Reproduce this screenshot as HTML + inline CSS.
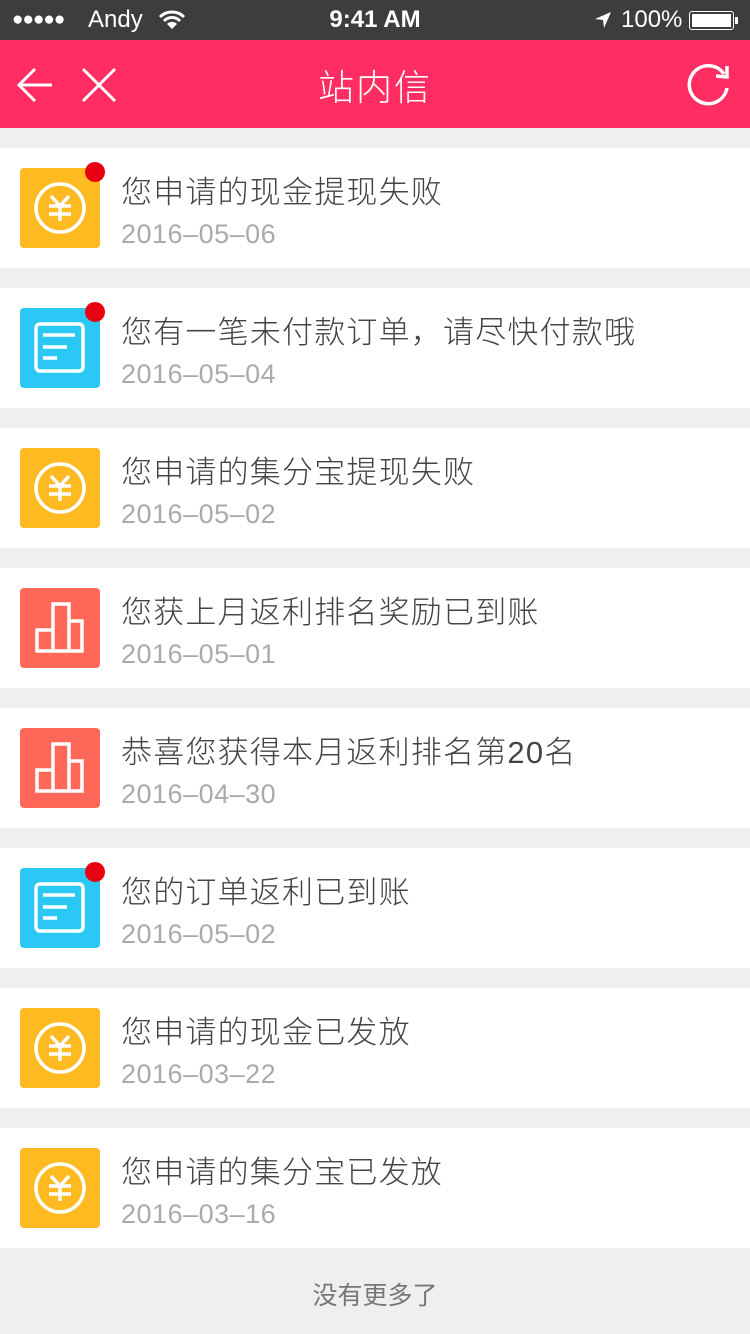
<!DOCTYPE html>
<html><head><meta charset="utf-8"><style>
*{margin:0;padding:0;box-sizing:border-box}
body{width:750px;height:1334px;background:#efefef;font-family:"Liberation Sans","Noto Sans CJK SC",sans-serif;position:relative;overflow:hidden}
.sb{position:absolute;top:0;left:0;width:750px;height:40px;background:#3d3d3d;color:#fff;font-size:24px}
.hd{position:absolute;top:40px;left:0;width:750px;height:88px;background:#ff2d62;color:#fff}
.row{position:absolute;left:0;width:750px;height:120px;background:#fff}
.row svg{position:absolute;left:0;top:0}
.t{position:absolute;left:121px;top:19px;font-size:31px;letter-spacing:1.2px;color:#444;white-space:nowrap;font-weight:300}
.d{position:absolute;left:121px;top:71px;font-size:27px;color:#aaa;letter-spacing:0.5px}
.ft{position:absolute;top:1276px;width:750px;text-align:center;font-size:25px;color:#777}
</style></head><body>
<div class="sb">
<div style="position:absolute;left:12px;top:9px;font-size:19px;letter-spacing:-1px">●●●●●</div>
<div style="position:absolute;left:88px;top:6px">Andy</div>
<svg style="position:absolute;left:158px;top:9px" width="28" height="22" viewBox="0 0 28 22"><path d="M2 8 A17 17 0 0 1 26 8" stroke="#fff" stroke-width="3" fill="none"/><path d="M6 12 A11 11 0 0 1 22 12" stroke="#fff" stroke-width="3" fill="none"/><path d="M14 20 L9 15 A7 7 0 0 1 19 15 Z" fill="#fff"/></svg>
<div style="position:absolute;left:0;width:750px;text-align:center;top:6px;font-weight:bold">9:41 AM</div>
<svg style="position:absolute;left:594px;top:11px" width="18" height="18" viewBox="0 0 18 18"><path d="M17 1 L1 8 L9 9 L10 17 Z" fill="#fff"/></svg>
<div style="position:absolute;left:621px;top:6px">100%</div>
<div style="position:absolute;left:689px;top:11px;width:45px;height:19px;border:1.5px solid #fff;border-radius:3px;padding:2px"><div style="background:#fff;width:100%;height:100%"></div></div>
<div style="position:absolute;left:735px;top:17px;width:3px;height:7px;background:#fff"></div>
</div>
<div class="hd">
<svg style="position:absolute;left:14px;top:24px" width="44" height="42" viewBox="0 0 44 42"><path d="M38 21 H6 M21 5 L5 21 L21 37" stroke="#fff" stroke-width="3" fill="none"/></svg>
<svg style="position:absolute;left:80px;top:26px" width="38" height="38" viewBox="0 0 38 38"><path d="M3 3 L35 35 M35 3 L3 35" stroke="#fff" stroke-width="3"/></svg>
<div style="position:absolute;left:0;width:750px;text-align:center;top:19px;font-size:36px;letter-spacing:2px;font-weight:300">站内信</div>
<svg style="position:absolute;left:686px;top:24px" width="46" height="44" viewBox="0 0 46 44"><path d="M38 10 A19 19 0 1 0 41 24" stroke="#fff" stroke-width="3.5" fill="none"/><path d="M30 12 L41 13 L41 2" stroke="#fff" stroke-width="3.5" fill="none"/></svg>
</div>

<div class="row" style="top:148px"><svg width="120" height="120"><rect x="20" y="20" width="80" height="80" rx="4" fill="#febb21"/><circle cx="60" cy="60" r="24" stroke="#fff" stroke-width="3.5" fill="none"/><path d="M51 48 L60 58 L69 48 M49 58 H71 M49 66 H71 M60 58 V73" stroke="#fff" stroke-width="3.5" fill="none"/><circle cx="95" cy="24" r="10" fill="#e60012"/></svg><div class="t">您申请的现金提现失败</div><div class="d">2016–05–06</div></div>
<div class="row" style="top:288px"><svg width="120" height="120"><rect x="20" y="20" width="80" height="80" rx="4" fill="#2cc8f5"/><rect x="36" y="36" width="47" height="47" rx="4" stroke="#fff" stroke-width="3.5" fill="none"/><path d="M43 47 H75 M43 59 H67 M43 70 H57" stroke="#fff" stroke-width="3.5"/><circle cx="95" cy="24" r="10" fill="#e60012"/></svg><div class="t">您有一笔未付款订单，请尽快付款哦</div><div class="d">2016–05–04</div></div>
<div class="row" style="top:428px"><svg width="120" height="120"><rect x="20" y="20" width="80" height="80" rx="4" fill="#febb21"/><circle cx="60" cy="60" r="24" stroke="#fff" stroke-width="3.5" fill="none"/><path d="M51 48 L60 58 L69 48 M49 58 H71 M49 66 H71 M60 58 V73" stroke="#fff" stroke-width="3.5" fill="none"/></svg><div class="t">您申请的集分宝提现失败</div><div class="d">2016–05–02</div></div>
<div class="row" style="top:568px"><svg width="120" height="120"><rect x="20" y="20" width="80" height="80" rx="4" fill="#ff6859"/><path d="M37 83 V62 H53 V83 Z M53 83 V36 H69 V83 Z M69 83 V53 H82 V83 Z" stroke="#fff" stroke-width="3.5" fill="none"/></svg><div class="t">您获上月返利排名奖励已到账</div><div class="d">2016–05–01</div></div>
<div class="row" style="top:708px"><svg width="120" height="120"><rect x="20" y="20" width="80" height="80" rx="4" fill="#ff6859"/><path d="M37 83 V62 H53 V83 Z M53 83 V36 H69 V83 Z M69 83 V53 H82 V83 Z" stroke="#fff" stroke-width="3.5" fill="none"/></svg><div class="t">恭喜您获得本月返利排名第20名</div><div class="d">2016–04–30</div></div>
<div class="row" style="top:848px"><svg width="120" height="120"><rect x="20" y="20" width="80" height="80" rx="4" fill="#2cc8f5"/><rect x="36" y="36" width="47" height="47" rx="4" stroke="#fff" stroke-width="3.5" fill="none"/><path d="M43 47 H75 M43 59 H67 M43 70 H57" stroke="#fff" stroke-width="3.5"/><circle cx="95" cy="24" r="10" fill="#e60012"/></svg><div class="t">您的订单返利已到账</div><div class="d">2016–05–02</div></div>
<div class="row" style="top:988px"><svg width="120" height="120"><rect x="20" y="20" width="80" height="80" rx="4" fill="#febb21"/><circle cx="60" cy="60" r="24" stroke="#fff" stroke-width="3.5" fill="none"/><path d="M51 48 L60 58 L69 48 M49 58 H71 M49 66 H71 M60 58 V73" stroke="#fff" stroke-width="3.5" fill="none"/></svg><div class="t">您申请的现金已发放</div><div class="d">2016–03–22</div></div>
<div class="row" style="top:1128px"><svg width="120" height="120"><rect x="20" y="20" width="80" height="80" rx="4" fill="#febb21"/><circle cx="60" cy="60" r="24" stroke="#fff" stroke-width="3.5" fill="none"/><path d="M51 48 L60 58 L69 48 M49 58 H71 M49 66 H71 M60 58 V73" stroke="#fff" stroke-width="3.5" fill="none"/></svg><div class="t">您申请的集分宝已发放</div><div class="d">2016–03–16</div></div>
<div class="ft">没有更多了</div>
</body></html>
